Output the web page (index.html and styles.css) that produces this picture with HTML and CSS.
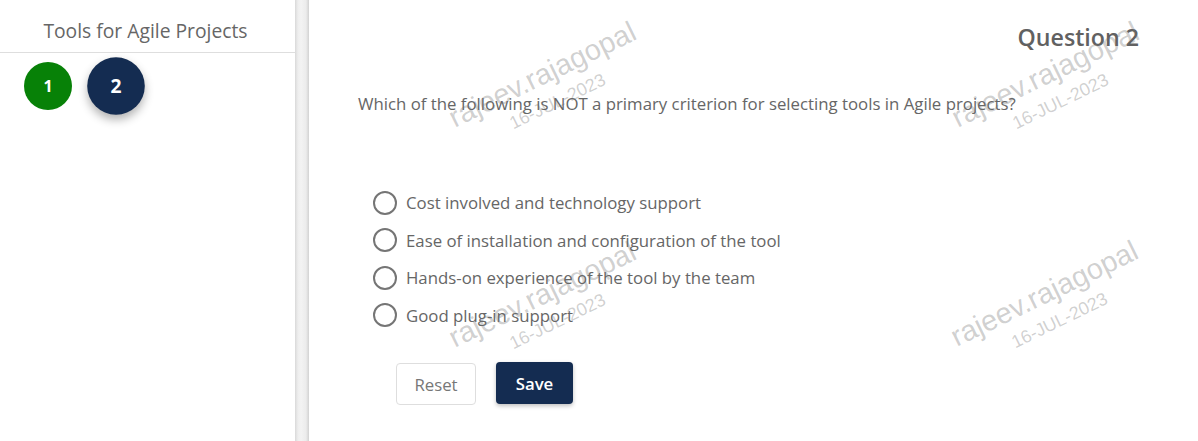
FILE: index.html
```html
<!DOCTYPE html>
<html lang="en">
<head>
<meta charset="utf-8">
<title>Tools for Agile Projects</title>
<link rel="stylesheet" href="styles.css">
</head>
<body>
<div class="page">
  <aside class="sidebar">
    <div class="sidebar-title">Tools for Agile Projects</div>
    <div class="steps">
      <span class="step done">1</span>
      <span class="step active">2</span>
    </div>
  </aside>
  <div class="divider"></div>
  <main class="main">
    <h2 class="q-number">Question 2</h2>
    <p class="q-text">Which of the following is NOT a primary criterion for selecting tools in Agile projects?</p>
    <div class="options">
      <label class="option"><input type="radio" name="q2" class="radio"><span>Cost involved and technology support</span></label>
      <label class="option"><input type="radio" name="q2" class="radio"><span>Ease of installation and configuration of the tool</span></label>
      <label class="option"><input type="radio" name="q2" class="radio"><span>Hands-on experience of the tool by the team</span></label>
      <label class="option"><input type="radio" name="q2" class="radio"><span>Good plug-in support</span></label>
    </div>
    <div class="actions">
      <button class="btn btn-reset">Reset</button>
      <button class="btn btn-save">Save</button>
    </div>
    <div class="wm wm-1"><div class="wm-name">rajeev.rajagopal</div><div class="wm-date">16-JUL-2023</div></div>
    <div class="wm wm-2"><div class="wm-name">rajeev.rajagopal</div><div class="wm-date">16-JUL-2023</div></div>
    <div class="wm wm-3"><div class="wm-name">rajeev.rajagopal</div><div class="wm-date">16-JUL-2023</div></div>
    <div class="wm wm-4"><div class="wm-name">rajeev.rajagopal</div><div class="wm-date">16-JUL-2023</div></div>
  </main>
</div>
</body>
</html>
```
FILE: styles.css
```css
* { box-sizing: border-box; }
html, body { margin: 0; padding: 0; background: #fff; }
body {
  font-family: "Open Sans", "Noto Sans", sans-serif;
  color: #666;
  width: 1198px;
  height: 441px;
  overflow: hidden;
}
.page {
  display: flex;
  height: 441px;
}
.sidebar {
  width: 295px;
  flex: none;
  background: #fff;
}
.sidebar-title {
  height: 53px;
  border-bottom: 1px solid #dedede;
  font-size: 19.3px;
  line-height: 26px;
  padding: 18px 4px 0 0;
  text-align: center;
  color: #666;
}
.steps {
  display: flex;
  align-items: center;
  padding: 9px 0 0 24px;
  gap: 19px;
}
.step {
  width: 48px;
  height: 48px;
  border-radius: 50%;
  display: flex;
  align-items: center;
  justify-content: center;
  color: #fff;
  font-weight: 700;
  font-size: 16px;
}
.step.done { background: #078107; }
.step.active {
  background: #142c51;
  transform: scale(1.2);
  box-shadow: 0 4px 8px rgba(0, 0, 0, 0.3);
  position: relative;
  left: 1px;
}
.divider {
  width: 14px;
  flex: none;
  background: linear-gradient(to right, #d9d9d9 0, #eeeeee 3px, #f3f3f3 6px, #ececec 11px, #d2d2d2 14px);
}
.main {
  flex: 1;
  position: relative;
  padding: 0 59px 0 49px;
}
.q-number {
  margin: 0;
  padding-top: 21px;
  text-align: right;
  font-size: 23.2px;
  line-height: 32px;
  font-weight: 600;
  color: #616161;
}
.q-text {
  margin: 39px 0 0 0;
  font-size: 16.8px;
  line-height: 24px;
  color: #666;
}
.options {
  margin-top: 68px;
  padding-left: 15px;
  display: flex;
  flex-direction: column;
}
.option {
  display: flex;
  align-items: center;
  gap: 9px;
  height: 37.5px;
  font-size: 16.8px;
  color: #666;
}
.radio {
  appearance: none;
  -webkit-appearance: none;
  margin: 0;
  width: 24px;
  height: 24px;
  border: 2px solid #757575;
  border-radius: 50%;
  background: #fff;
  flex: none;
}
.actions {
  display: flex;
  gap: 20px;
  padding-left: 38px;
  margin-top: 29px;
}
.btn {
  font-family: "Open Sans", "Noto Sans", sans-serif;
  font-size: 16.8px;
  height: 42px;
  border-radius: 4px;
  cursor: pointer;
}
.btn-reset {
  width: 80px;
  background: #fff;
  border: 1px solid #dedede;
  color: #777;
}
.btn-save {
  width: 77px;
  background: #142c51;
  border: none;
  color: #fff;
  font-weight: 600;
  box-shadow: 0 2px 4px rgba(0, 0, 0, 0.25);
  position: relative;
  top: -1px;
}
.wm {
  position: absolute;
  font-family: "Liberation Sans", Arial, sans-serif;
  color: rgba(110, 110, 110, 0.33);
  transform: rotate(-26deg);
  transform-origin: 0 24.5px;
  white-space: nowrap;
  pointer-events: none;
}
.wm-name { font-size: 29px; line-height: 29px; }
.wm-date { font-size: 18px; line-height: 18px; margin: 6.6px 0 0 52px; }
.wm-1 { left: 146px; top: 103.5px; }
.wm-2 { left: 146px; top: 324px; }
.wm-3 { left: 649px; top: 103.5px; }
.wm-4 { left: 648px; top: 323px; }
```
